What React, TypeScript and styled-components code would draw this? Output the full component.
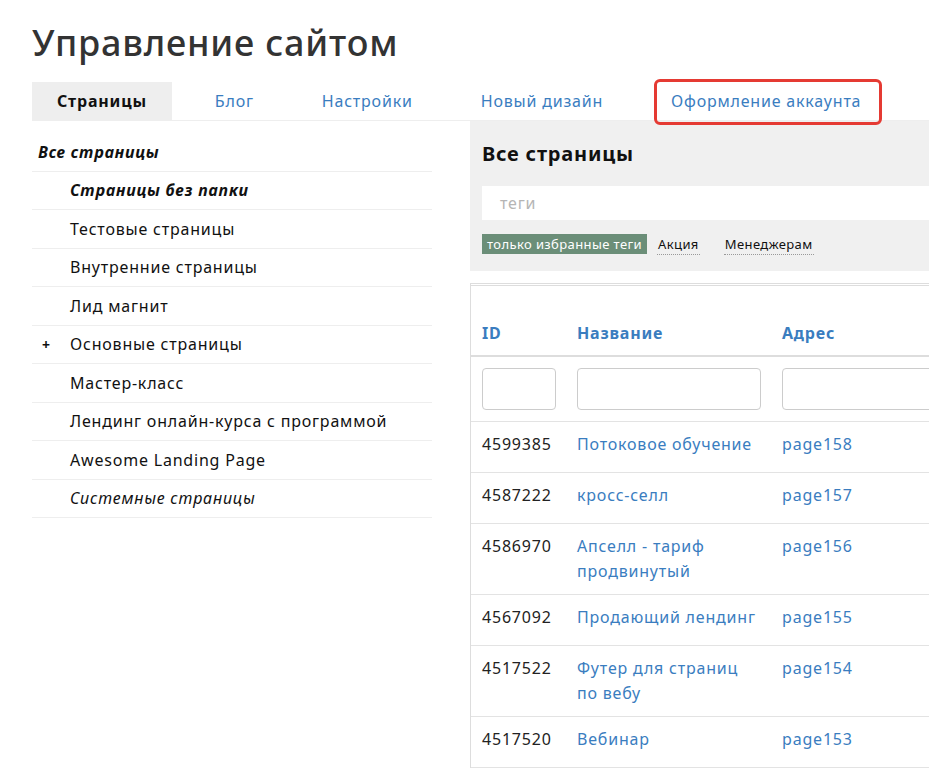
import styled, { createGlobalStyle } from "styled-components";

const GlobalStyle = createGlobalStyle`
    html, body {
        margin: 0;
        padding: 0;
        overflow: hidden;
        background: #fff;
    }
    body {
        font-family: "Noto Sans", "Open Sans", sans-serif;
        letter-spacing: 0.05em;
        color: #222;
    }
`;

const BLUE = "#3a7dbf";

const Page = styled.div`
    padding: 20px 0 0 32px;
    width: 929px;
    box-sizing: border-box;
    height: 769px;
    overflow: hidden;
`;

const Title = styled.h1`
    margin: 0;
    font-size: 36px;
    line-height: 46px;
    font-weight: 500;
    color: #333;
    letter-spacing: 0.8px;
`;

const Tabs = styled.div`
    margin-top: 16px;
    display: flex;
    height: 38px;
    border-bottom: 1px solid #eee;
`;

const Tab = styled.div<{ active?: boolean; marked?: boolean }>`
    position: relative;
    display: flex;
    align-items: center;
    padding: 0 25px;
    margin-right: 18px;
    font-size: 16px;
    font-weight: ${(p) => (p.active ? 700 : 400)};
    color: ${(p) => (p.active ? "#111" : BLUE)};
    background: ${(p) => (p.active ? "#eee" : "transparent")};
    white-space: nowrap;
    &::after {
        content: "";
        display: ${(p) => (p.marked ? "block" : "none")};
        position: absolute;
        top: -3px;
        bottom: -5px;
        left: 8px;
        right: 4px;
        border: 3px solid #e53a33;
        border-radius: 6px;
    }
`;

const Body = styled.div`
    display: grid;
    grid-template-columns: 400px 600px;
    column-gap: 38px;
`;

const Sidebar = styled.div`
    padding-top: 12px;
`;

const FolderRow = styled.div<{ level: number; bold?: boolean; italic?: boolean }>`
    display: flex;
    align-items: center;
    height: 37.5px;
    border-bottom: 1px solid #eee;
    padding-left: ${(p) => (p.level === 0 ? 6 : 38)}px;
    font-size: 16px;
    font-weight: ${(p) => (p.bold ? 700 : 400)};
    font-style: ${(p) => (p.italic ? "italic" : "normal")};
    color: #111;
    position: relative;
`;

const Plus = styled.span`
    position: absolute;
    left: 10px;
    font-size: 14px;
    font-weight: 700;
`;

const Main = styled.div`
    display: flex;
    flex-direction: column;
`;

const FilterPanel = styled.div`
    background: #f0f0f0;
    padding: 18px 0 17px 12px;
`;

const PanelTitle = styled.div`
    font-size: 20px;
    line-height: 30px;
    font-weight: 700;
    color: #111;
`;

const TagsInput = styled.div`
    margin-top: 17px;
    height: 34px;
    background: #fff;
    display: flex;
    align-items: center;
    padding-left: 18px;
    font-size: 16px;
    color: #b5b5b5;
`;

const ChipRow = styled.div`
    margin-top: 14px;
    display: flex;
    align-items: center;
    height: 20px;
    gap: 10px;
`;

const Chip = styled.span<{ selected?: boolean }>`
    font-size: 13px;
    line-height: 20px;
    letter-spacing: 0.4px;
    padding: ${(p) => (p.selected ? "0 5px" : "0 1px")};
    background: ${(p) => (p.selected ? "#6b8e78" : "transparent")};
    color: ${(p) => (p.selected ? "#fff" : "#111")};
    border-bottom: ${(p) => (p.selected ? "none" : "1px dotted #999")};
    margin-right: ${(p) => (p.selected ? 0 : 14)}px;
`;

const TableBox = styled.div`
    margin-top: 12px;
    border-left: 1px solid #ddd;
    border-top: 3px double #ddd;
`;

const Table = styled.table`
    border-collapse: collapse;
    table-layout: fixed;
    width: 100%;
    font-size: 16px;
`;

const Th = styled.th<{ w?: number }>`
    box-sizing: border-box;
    text-align: left;
    padding: 35px 10px 9px 11px;
    line-height: 25px;
    font-weight: 700;
    color: ${BLUE};
    border-bottom: 2px solid #ddd;
    width: ${(p) => (p.w ? `${p.w}px` : "auto")};
`;

const FilterCell = styled.td`
    padding: 11px 10px 11px 11px;
    border-bottom: 1px solid #e3e3e3;
`;

const FilterInput = styled.div`
    height: 40px;
    border: 1px solid #ccc;
    border-radius: 4px;
    background: #fff;
`;

const Td = styled.td<{ link?: boolean }>`
    vertical-align: top;
    padding: 10px 10px 10px 11px;
    height: 30px;
    line-height: 25px;
    color: ${(p) => (p.link ? BLUE : "#222")};
    border-bottom: 1px solid #e3e3e3;
`;

const folders = [
    { name: "Все страницы", level: 0, bold: true, italic: true },
    { name: "Страницы без папки", level: 1, bold: true, italic: true },
    { name: "Тестовые страницы", level: 1 },
    { name: "Внутренние страницы", level: 1 },
    { name: "Лид магнит", level: 1 },
    { name: "Основные страницы", level: 1, plus: true },
    { name: "Мастер-класс", level: 1 },
    { name: "Лендинг онлайн-курса с программой", level: 1 },
    { name: "Awesome Landing Page", level: 1 },
    { name: "Системные страницы", level: 1, italic: true },
];

const pages = [
    { id: "4599385", name: "Потоковое обучение", url: "page158" },
    { id: "4587222", name: "кросс-селл", url: "page157" },
    { id: "4586970", name: "Апселл - тариф продвинутый", url: "page156" },
    { id: "4567092", name: "Продающий лендинг", url: "page155" },
    { id: "4517522", name: "Футер для страниц по вебу", url: "page154" },
    { id: "4517520", name: "Вебинар", url: "page153" },
];

export default function App() {
    return (
        <Page>
            <GlobalStyle />
            <Title>Управление сайтом</Title>
            <Tabs>
                <Tab active>Страницы</Tab>
                <Tab>Блог</Tab>
                <Tab>Настройки</Tab>
                <Tab>Новый дизайн</Tab>
                <Tab marked>Оформление аккаунта</Tab>
            </Tabs>
            <Body>
                <Sidebar>
                    {folders.map((f) => (
                        <FolderRow key={f.name} level={f.level} bold={f.bold} italic={f.italic}>
                            {f.plus && <Plus>+</Plus>}
                            {f.name}
                        </FolderRow>
                    ))}
                </Sidebar>
                <Main>
                    <FilterPanel>
                        <PanelTitle>Все страницы</PanelTitle>
                        <TagsInput>теги</TagsInput>
                        <ChipRow>
                            <Chip selected>только избранные теги</Chip>
                            <Chip>Акция</Chip>
                            <Chip>Менеджерам</Chip>
                        </ChipRow>
                    </FilterPanel>
                    <TableBox>
                        <Table>
                            <thead>
                                <tr>
                                    <Th w={95}>ID</Th>
                                    <Th w={205}>Название</Th>
                                    <Th>Адрес</Th>
                                </tr>
                            </thead>
                            <tbody>
                                <tr>
                                    <FilterCell><FilterInput /></FilterCell>
                                    <FilterCell><FilterInput /></FilterCell>
                                    <FilterCell><FilterInput /></FilterCell>
                                </tr>
                                {pages.map((p) => (
                                    <tr key={p.id}>
                                        <Td>{p.id}</Td>
                                        <Td link>{p.name}</Td>
                                        <Td link>{p.url}</Td>
                                    </tr>
                                ))}
                            </tbody>
                        </Table>
                    </TableBox>
                </Main>
            </Body>
        </Page>
    );
}
